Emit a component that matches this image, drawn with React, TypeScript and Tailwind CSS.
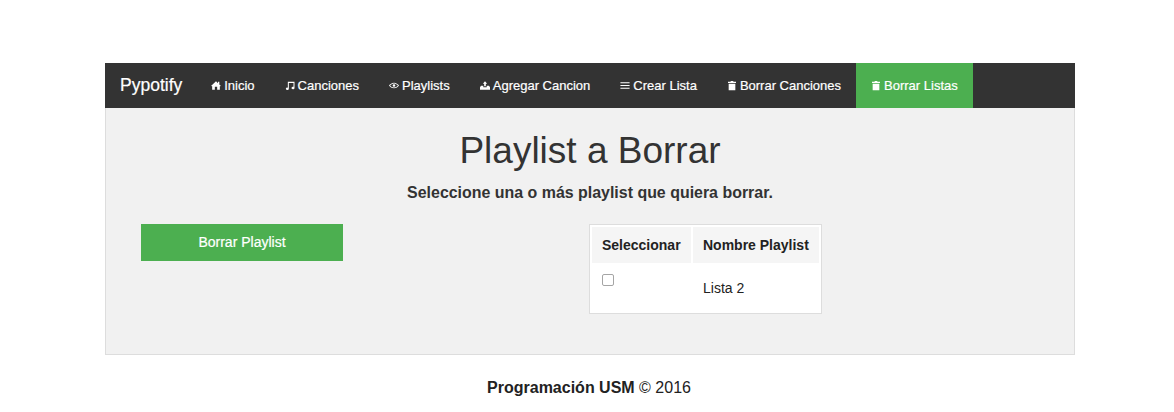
import React from 'react';

const iconClass = 'w-[10px] h-[11px] fill-current shrink-0';

const HomeIcon = () => (
    <svg viewBox="0 0 12 12" className={iconClass}>
        <path d="M6 1 L8.4 3.2 V1.6 H10 V4.7 L12 6.6 L10.6 6.9 V11 H7.4 V7.6 H4.6 V11 H1.4 V6.9 L0 6.6 Z" />
    </svg>
);

const MusicIcon = () => (
    <svg viewBox="0 0 12 12" className={iconClass}>
        <path d="M3.4 1.6 H11.4 V9 A1.8 1.5 0 1 1 10.2 7.6 V3 H4.6 V10 A1.8 1.5 0 1 1 3.4 8.6 Z" />
    </svg>
);

const EyeIcon = () => (
    <svg viewBox="0 0 12 12" className={iconClass}>
        <path fillRule="evenodd" d="M6 2.6 C8.6 2.6 10.8 4.4 12 6 C10.8 7.6 8.6 9.4 6 9.4 C3.4 9.4 1.2 7.6 0 6 C1.2 4.4 3.4 2.6 6 2.6 Z M6 3.6 C4 3.6 2.4 4.8 1.3 6 C2.4 7.2 4 8.4 6 8.4 C8 8.4 9.6 7.2 10.7 6 C9.6 4.8 8 3.6 6 3.6 Z M6 4.4 A1.6 1.6 0 1 1 6 7.6 A1.6 1.6 0 1 1 6 4.4 Z" />
    </svg>
);

const UploadIcon = () => (
    <svg viewBox="0 0 12 12" className={iconClass}>
        <path d="M6 1 L8.6 3.8 H7 V7 H5 V3.8 H3.4 Z M0 11 V8 L1.2 6.4 H4 V8 H8 V6.4 H10.8 L12 8 V11 Z" />
    </svg>
);

const ListIcon = () => (
    <svg viewBox="0 0 12 12" className={iconClass}>
        <path d="M0.5 2 H11.5 V3.4 H0.5 Z M0.5 5.3 H11.5 V6.7 H0.5 Z M0.5 8.6 H11.5 V10 H0.5 Z" />
    </svg>
);

const TrashIcon = () => (
    <svg viewBox="0 0 12 12" className={iconClass}>
        <path d="M4.4 0.6 H7.6 V1.6 H10.8 V3 H1.2 V1.6 H4.4 Z M2 3.8 H10 V11.6 H2 Z" />
    </svg>
);

const navItems = [
    { label: 'Inicio', icon: <HomeIcon /> },
    { label: 'Canciones', icon: <MusicIcon /> },
    { label: 'Playlists', icon: <EyeIcon /> },
    { label: 'Agregar Cancion', icon: <UploadIcon /> },
    { label: 'Crear Lista', icon: <ListIcon /> },
    { label: 'Borrar Canciones', icon: <TrashIcon /> },
    { label: 'Borrar Listas', icon: <TrashIcon />, active: true },
];

const App = () => {
    return (
        <div className="min-h-[412px] bg-white font-['Liberation_Sans',Arial,sans-serif] text-[#222] pt-[63px]">
            <div className="w-[970px] ml-[105px]">
                <nav className="flex h-[45px] bg-[#333] [-webkit-text-stroke:0.2px_white]">
                    <a className="flex items-center pl-[15px] pr-[14px] text-[17.5px] text-white">Pypotify</a>
                    {navItems.map(item => (
                        <a
                            key={item.label}
                            className={`flex items-center gap-[3px] px-[15px] text-[13px] text-white ${item.active ? 'bg-[#4caf50]' : ''}`}
                        >
                            {item.icon}
                            <span>{item.label}</span>
                        </a>
                    ))}
                </nav>

                <main className="h-[247px] bg-[#f1f1f1] border border-t-0 border-[#ddd]">
                    <h1 className="text-center text-[37px] leading-[40px] text-[#333] pt-[23px]">Playlist a Borrar</h1>
                    <p className="text-center text-[15.95px] font-bold text-[#333] mt-[11px] leading-[22px]">
                        Seleccione una o más playlist que quiera borrar.
                    </p>
                    <div className="grid grid-cols-[483px_1fr] mt-[20px]">
                        <div className="pl-[35px]">
                            <button className="w-[202px] h-[37px] bg-[#4caf50] text-white text-[14px] [-webkit-text-stroke:0.2px_white]">Borrar Playlist</button>
                        </div>
                        <div>
                            <table className="w-[233px] bg-white border border-[#ddd] border-separate border-spacing-[2px] text-[14px] text-[#222]">
                                <thead>
                                    <tr>
                                        <th className="h-[36px] w-[99px] bg-[#f5f5f5] font-bold text-left px-[10px]">Seleccionar</th>
                                        <th className="h-[36px] bg-[#f5f5f5] font-bold text-left px-[10px]">Nombre Playlist</th>
                                    </tr>
                                </thead>
                                <tbody>
                                    <tr>
                                        <td className="h-[46px] align-top px-[10px] pt-[9px]">
                                            <input type="checkbox" className="block appearance-none w-[12px] h-[12px] bg-white border border-[#a5a5a5] rounded-[2px]" />
                                        </td>
                                        <td className="h-[46px] px-[10px]">Lista 2</td>
                                    </tr>
                                </tbody>
                            </table>
                        </div>
                    </div>
                </main>

                <footer className="text-center text-[16px] text-[#222] mt-[23px] leading-[20px] pr-[2px]">
                    <strong>Programación USM</strong> © 2016
                </footer>
            </div>
        </div>
    );
};

export default App;
